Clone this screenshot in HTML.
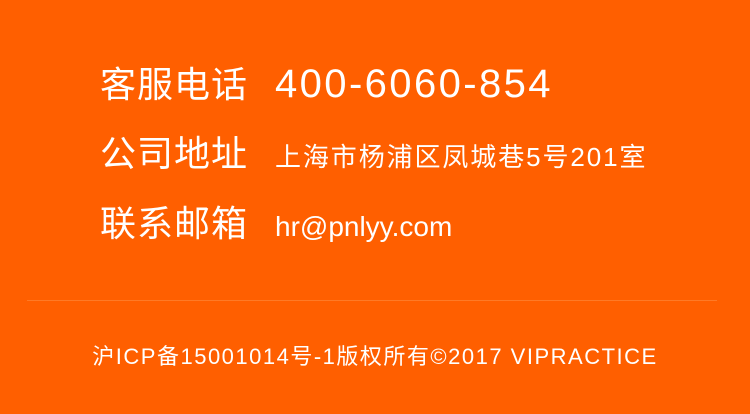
<!DOCTYPE html>
<html><head><meta charset="utf-8">
<style>
html,body{margin:0;padding:0}
body{width:750px;height:414px;background:#ff5f00;position:relative;overflow:hidden;color:#fff;font-family:"Liberation Sans","Noto Sans CJK SC",sans-serif}
.row{position:absolute;left:100px;white-space:nowrap;line-height:1}
.lab{font-size:36px;letter-spacing:1px;display:inline-block;width:175px}
.v1{font-size:40px;letter-spacing:2.4px}
.v2{font-size:26px;letter-spacing:1.9px}
.v3{font-size:28px}
.line{position:absolute;left:27px;width:690px;top:300px;height:1px;background:#ff7a26}
.foot{position:absolute;left:0;width:750px;top:346px;text-align:center;font-size:22px;letter-spacing:1.5px;line-height:1;white-space:nowrap}
</style></head><body>
<div class="row" style="top:64px"><span class="lab">客服电话</span><span class="v1">400-6060-854</span></div>
<div class="row" style="top:136px"><span class="lab">公司地址</span><span class="v2">上海市杨浦区凤城巷5号201室</span></div>
<div class="row" style="top:206px"><span class="lab">联系邮箱</span><span class="v3">hr@pnlyy.com</span></div>
<div class="line"></div>
<div class="foot">沪ICP备15001014号-1版权所有©2017 VIPRACTICE</div>
</body></html>
